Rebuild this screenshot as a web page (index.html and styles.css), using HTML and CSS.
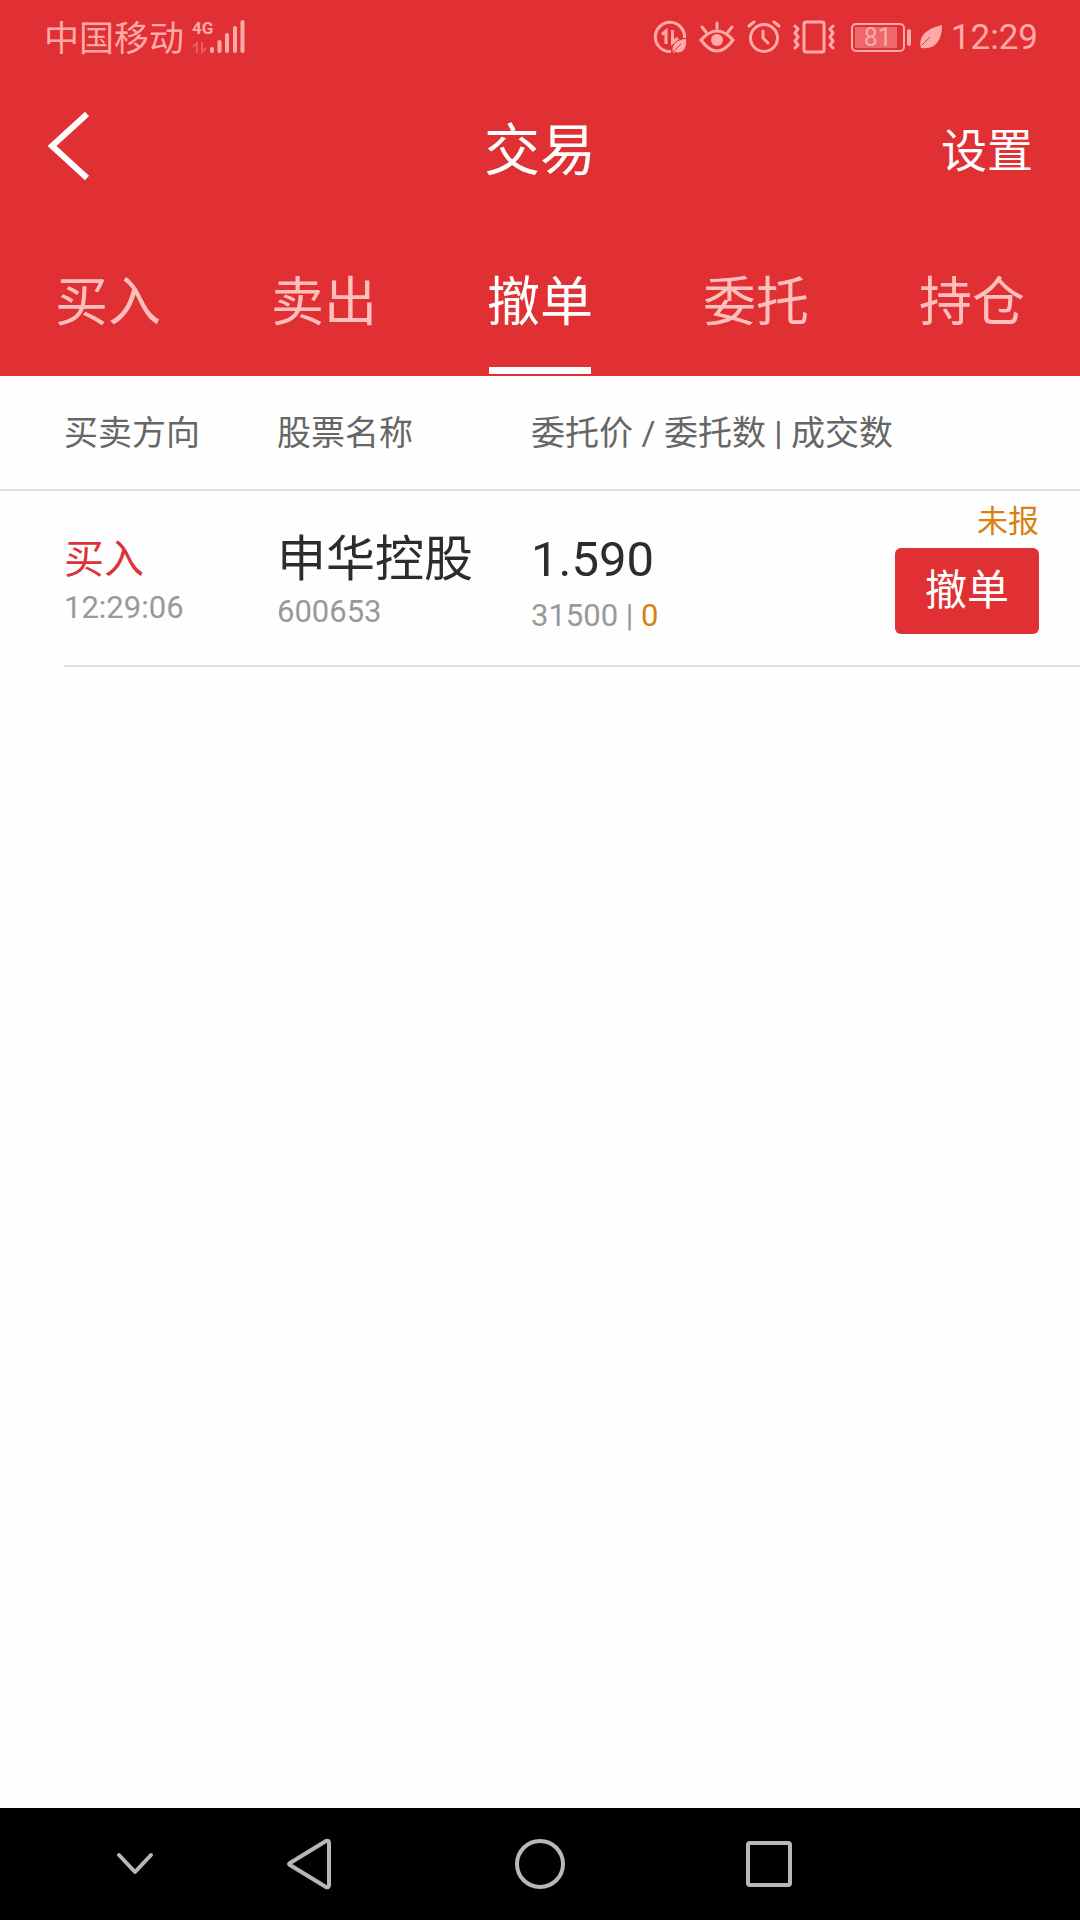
FILE: index.html
```html
<!DOCTYPE html>
<html lang="zh-CN">
<head>
<meta charset="utf-8">
<meta name="viewport" content="width=device-width, initial-scale=1">
<title>交易</title>
<link rel="stylesheet" href="styles.css">
</head>
<body>
<div class="app">
  <header class="header">
    <div class="status-bar">
      <div class="carrier">
        <span class="carrier-name">中国移动</span>
        <svg class="signal" width="56" height="36" viewBox="0 0 56 36" aria-hidden="true">
          <text class="signal-type" x="2" y="15">4G</text>
          <g opacity=".35" fill="none" stroke="currentColor" stroke-width="2"><path d="M7 34V24L3 28M12 23v10l4-4"/></g>
          <g stroke="currentColor" stroke-width="4" stroke-linecap="round"><path d="M22 32v-2M29.500 32V23M37 32V16M45 32V9M52.500 32V3"/></g>
        </svg>
      </div>
      <div class="indicators">
        <svg width="34" height="34" viewBox="0 0 34 34" fill="none" stroke="currentColor" stroke-width="3" aria-hidden="true">
          <path d="M18 31.500A14.600 14.600 0 1 1 31.500 18"/>
          <path d="M9 14.500L13 11V24M19.500 10V22.500L25 18"/>
          <path d="M20 33C18 25 23 20 33 19C34 28 30 34 22 32Z" fill="currentColor" stroke="none"/>
          <path d="M20 32L28 24" stroke="#e03033" stroke-width="1"/>
        </svg>
        <svg class="eye" width="36" height="34" viewBox="0 0 36 34" fill="none" stroke="currentColor" stroke-width="3" stroke-linecap="round" aria-hidden="true">
          <path d="M2 20Q18 2 34 20Q18 42 2 20ZM18 8V3M7 12L3 7M29 12L33 7"/>
          <circle cx="18" cy="20" r="6" fill="currentColor" stroke="none"/>
        </svg>
        <svg width="34" height="34" viewBox="0 0 34 34" fill="none" stroke="currentColor" stroke-width="3" stroke-linecap="round" aria-hidden="true">
          <circle cx="17" cy="18" r="13.500"/><path d="M16 11V18L21 23M2 6L7 2M27 2L32 6"/>
        </svg>
        <svg width="42" height="34" viewBox="0 0 42 34" fill="none" stroke="currentColor" stroke-width="3" stroke-linecap="round" stroke-linejoin="round" aria-hidden="true">
          <rect x="11" y="2" width="20" height="30" rx="2"/>
          <path d="M2 6L5 9L2 13L5 17L2 21L5 25L2 28M40 6L37 9L40 13L37 17L40 21L37 25L40 28"/>
        </svg>
        <div class="battery"><span class="battery-level">81</span></div>
        <svg class="leaf" width="24" height="24" viewBox="0 0 24 24" aria-hidden="true">
          <path d="M2 23C-1 12 6 4 23 0C23 16 16 25 2 23Z" fill="currentColor"/><path d="M3 20L11 12" stroke="#b35258"/>
        </svg>
        <time class="clock">12:29</time>
      </div>
    </div>
    <div class="title-bar">
      <button class="back" type="button" aria-label="返回">
        <svg width="44" height="70" viewBox="0 0 44 70" fill="none" stroke="currentColor" stroke-width="6" aria-hidden="true"><path d="M40 2L5 34L40 66"/></svg>
      </button>
      <h1 class="title">交易</h1>
      <button class="settings" type="button">设置</button>
    </div>
    <nav class="tabs">
      <a class="tab" href="#buy">买入</a>
      <a class="tab" href="#sell">卖出</a>
      <a class="tab tab-active" href="#cancel" aria-current="page">撤单</a>
      <a class="tab" href="#orders">委托</a>
      <a class="tab" href="#positions">持仓</a>
    </nav>
  </header>
  <main class="content">
    <table class="orders">
      <thead>
        <tr class="orders-head"><th>买卖方向</th><th>股票名称</th><th class="head-order">委托价 / 委托数 | 成交数</th></tr>
      </thead>
      <tbody>
        <tr class="order">
          <td class="cell"><span class="side">买入</span><span class="meta">12:29:06</span></td>
          <td class="cell"><span class="name">申华控股</span><span class="meta">600653</span></td>
          <td class="cell cell-price"><span class="price">1.590</span><span class="meta">31500 | <span class="filled">0</span></span></td>
          <td class="cell-action"><span class="state">未报</span><button class="cancel" type="button">撤单</button></td>
        </tr>
      </tbody>
    </table>
  </main>
  <footer class="system-nav">
    <button class="nav-key nav-hide" type="button" aria-label="收起"><svg width="40" height="52" viewBox="0 0 40 52"><path d="M4 17L20 34L36 17"/></svg></button>
    <button class="nav-key" type="button" aria-label="后退"><svg width="52" height="52" viewBox="0 0 52 52"><path d="M6 27Q4 26 6 25L42 3Q45 2 45 5V47Q45 50 42 49Z"/></svg></button>
    <button class="nav-key" type="button" aria-label="主屏幕"><svg width="52" height="52" viewBox="0 0 52 52"><circle cx="26" cy="26" r="23"/></svg></button>
    <button class="nav-key" type="button" aria-label="最近任务"><svg width="52" height="52" viewBox="0 0 52 52"><rect x="4" y="5" width="42" height="42" rx="2"/></svg></button>
  </footer>
</div>
</body>
</html>
```
FILE: styles.css
```css
* { box-sizing: border-box; }
body {
  margin: 0;
  background: #fefefe;
  color: #2c2c2c;
  font-family: Roboto, "Noto Sans CJK SC", sans-serif;
}
button {
  padding: 0;
  border: 0;
  background: none;
  color: inherit;
  font: inherit;
}
svg { display: block; flex: none; }
.app {
  display: flex;
  flex-direction: column;
  min-height: 100vh;
}

/* Header */
.header { background: #e03033; color: #fff; }
.status-bar {
  display: flex;
  justify-content: space-between;
  align-items: center;
  height: 74px;
  padding: 0 42px 0 44px;
  color: #ffa9a9;
  font-size: 35px;
  line-height: 48px;
}
.carrier, .indicators { display: flex; align-items: center; }
.carrier { gap: 6px; }
.carrier-name { padding-top: 5px; }
.signal-type { font: 700 17px Roboto, sans-serif; fill: currentColor; }
.indicators { gap: 12px; }
.battery {
  display: flex;
  align-items: center;
  gap: 2px;
  margin-left: 4px;
}
.battery-level {
  width: 54px;
  height: 29px;
  border: 2px solid currentColor;
  border-radius: 5px;
  background: linear-gradient(#ed686b, #ed686b) 2px center / 42px 21px no-repeat;
  font-size: 25px;
  line-height: 26px;
  text-align: center;
}
.battery::after {
  content: "";
  width: 4px;
  height: 17px;
  border-radius: 2px;
  background: currentColor;
}
.leaf, .clock { margin-left: -4px; }
.clock { padding-top: 2px; }
.title-bar {
  display: grid;
  grid-template-columns: 1fr auto 1fr;
  align-items: center;
  height: 146px;
  padding: 0 47px;
}
.back { justify-self: start; }
.title, .settings { margin: 0; padding-top: 7px; font-weight: 400; }
.title { font-size: 56px; line-height: 72px; }
.settings { justify-self: end; font-size: 46px; line-height: 64px; }
.tabs {
  display: grid;
  grid-template-columns: repeat(5, 1fr);
  justify-items: center;
  height: 156px;
  padding-bottom: 2px;
}
.tab {
  display: flex;
  align-items: center;
  padding-top: 12px;
  color: #ffc0bd;
  font-size: 53px;
  line-height: 72px;
  text-decoration: none;
}
.tab-active {
  background: linear-gradient(#fff, #fff) center bottom / 102px 7px no-repeat;
  color: #fff;
}

/* Orders */
.content { flex: 1; }
.orders, .orders thead, .orders tbody { display: block; }
.orders-head, .order {
  display: grid;
  grid-template-columns: 213fr 254fr 345fr 163fr;
  padding-right: 41px;
  border-bottom: 2px solid #dcdcdc;
}
.orders-head {
  align-items: center;
  height: 115px;
  padding-left: 64px;
  color: #666;
  font-size: 34px;
  line-height: 48px;
}
.orders th { padding: 0; font-weight: 400; text-align: left; }
.head-order { grid-column: span 2; }
.order { height: 176px; margin-left: 64px; }
.orders td { padding: 0; }
.orders .cell {
  display: flex;
  flex-direction: column;
  justify-content: center;
  padding-top: 4px;
}
.orders .cell-price { gap: 4px; padding-top: 8px; }
.side { color: #df3138; font-size: 40px; line-height: 56px; }
.name, .price { font-size: 49px; line-height: 64px; }
.meta { color: #999; font-size: 31px; line-height: 40px; }
.filled { color: #d88212; }
.orders .cell-action {
  display: flex;
  flex-direction: column;
  align-items: flex-end;
  gap: 6px;
  padding-top: 11px;
}
.state { color: #d88212; font-size: 31px; line-height: 40px; }
.cancel {
  width: 144px;
  height: 86px;
  border-radius: 6px;
  background: #e03033;
  color: #fff;
  font-size: 42px;
  line-height: 56px;
}

/* System navigation */
.system-nav {
  display: grid;
  grid-template-columns: 75fr 120fr 230fr 230fr 230fr 195fr;
  height: 112px;
  background: #000;
  color: #b8b8b8;
}
.nav-key { display: grid; place-items: center; }
.nav-hide { grid-column: 2; }
.nav-key svg { fill: none; stroke: currentColor; stroke-width: 4; stroke-linecap: round; stroke-linejoin: round; }
```
